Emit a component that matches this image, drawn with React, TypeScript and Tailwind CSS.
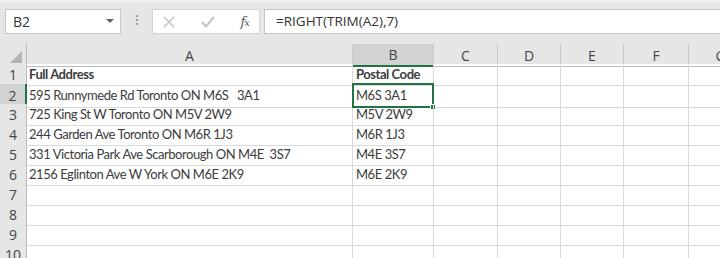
import React from "react";

const rows: { a: string; b: string; bold?: boolean }[] = [
  { a: "Full Address", b: "Postal Code", bold: true },
  { a: "595 Runnymede Rd Toronto ON M6S\u00a0\u00a0\u00a03A1", b: "M6S 3A1" },
  { a: "725 King St W Toronto ON M5V 2W9", b: "M5V 2W9" },
  { a: "244 Garden Ave Toronto ON M6R 1J3", b: "M6R 1J3" },
  { a: "331 Victoria Park Ave Scarborough ON M4E\u00a0\u00a03S7", b: "M4E 3S7" },
  { a: "2156 Eglinton Ave W York ON M6E 2K9", b: "M6E 2K9" },
  { a: "", b: "" },
  { a: "", b: "" },
  { a: "", b: "" },
  { a: "", b: "" },
];

const cols = ["C", "D", "E", "F", "G"];
const grid = "grid w-[753px] grid-cols-[27px_326px_81px_64px_63px_63px_65px_64px]";

const App = () => {
  return (
    <div className="w-[720px] h-[258px] overflow-hidden bg-white font-['Lato',sans-serif]">
      {/* Formula toolbar */}
      <div className="h-[44px] bg-[#e6e6e6] flex items-start pt-[9px] pl-[5px] border-t-[3px] border-[#efefef]">
        <div className="w-[116px] h-[25px] -mt-[3px] bg-white border border-[#c6c6c6] flex items-center justify-between pl-[7px] pr-[6px] font-['Open_Sans',sans-serif] text-[14px] text-[#333]">
          <span>B2</span>
          <svg width="8" height="5" viewBox="0 0 8 5">
            <path d="M0 0 L8 0 L4 4 Z" fill="#666" />
          </svg>
        </div>
        <div className="w-[31px] h-[22px] -mt-[3px] flex flex-col items-center justify-center gap-[2px]">
          <span className="w-[2px] h-[2px] bg-[#a0a0a0]" />
          <span className="w-[2px] h-[2px] bg-[#a0a0a0]" />
          <span className="w-[2px] h-[2px] bg-[#a0a0a0]" />
        </div>
        <div className="w-[108px] h-[25px] -mt-[3px] bg-white border border-[#d4d4d4] flex items-center justify-between px-[10px]">
          <svg width="12" height="12" viewBox="0 0 12 12">
            <path d="M1 1 L11 11 M11 1 L1 11" stroke="#c4c4c4" strokeWidth="1.6" />
          </svg>
          <svg width="14" height="12" viewBox="0 0 14 12">
            <path d="M1 6 L5 10.5 L13 1" stroke="#c4c4c4" strokeWidth="2" fill="none" />
          </svg>
          <span className="font-['DejaVu_Serif',serif] italic text-[13px] text-[#555] leading-none tracking-[-1px]">
            f<span className="text-[10px]">x</span>
          </span>
        </div>
        <div className="flex-1 h-[25px] -mt-[3px] ml-[4px] bg-white border border-[#c6c6c6] border-r-0 flex items-center pl-[11px] font-['Open_Sans',sans-serif] text-[13.5px] text-[#333]">
          =RIGHT(TRIM(A2),7)
        </div>
      </div>

      {/* Column headers */}
      <div className={`${grid} h-[20px] bg-[#e6e6e6] text-[14px] text-[#444] font-['Open_Sans',sans-serif]`}>
        <div className="border-r border-b border-[#bcbcbc] flex items-end justify-end pr-[4px] pb-[3px]">
          <svg width="12" height="12" viewBox="0 0 12 12">
            <path d="M12 0 L12 12 L0 12 Z" fill="#b4b4b4" />
          </svg>
        </div>
        <div className="border-r border-b border-[#bcbcbc] border-r-[#c8c8c8] flex items-center justify-center">A</div>
        <div className="bg-[#d2d2d2] border-r border-[#c8c8c8] border-b-2 border-b-[#217346] flex items-center justify-center">B</div>
        {cols.map((c) => (
          <div key={c} className="border-r border-b border-[#bcbcbc] border-r-[#c8c8c8] flex items-center justify-center">
            {c}
          </div>
        ))}
      </div>

      {/* Rows */}
      {rows.map((r, i) => {
        const n = i + 1;
        const sel = n === 2;
        return (
          <div key={n} className={`${grid} h-[20px] text-[13px] tracking-[-0.45px] text-[#3c3c3c]`}>
            <div
              className={`border-b flex items-center justify-center font-['Open_Sans',sans-serif] text-[14px] tracking-normal text-[#444] ${
                sel ? "bg-[#d2d2d2] border-r-2 border-r-[#217346] border-b-[#c8c8c8]" : "bg-[#e6e6e6] border-r border-[#c8c8c8] border-r-[#bcbcbc]"
              }`}
            >
              {n}
            </div>
            <div className={`border-r border-b border-[#dadada] flex items-center pl-[2px] pt-[1px] whitespace-nowrap ${r.bold ? "font-bold" : ""}`}>
              {r.a}
            </div>
            <div
              className={`relative flex items-center whitespace-nowrap pt-[1px] ${r.bold ? "font-bold" : ""} ${
                sel ? "border-2 border-[#217346] -mt-[1px] -ml-[1px] pl-[2px]" : "border-r border-b border-[#dadada] pl-[3px]"
              }`}
            >
              {r.b}
              {sel && <span className="absolute -right-[4px] -bottom-[4px] w-[6px] h-[6px] bg-[#217346] border border-white" />}
            </div>
            {cols.map((c) => (
              <div key={c} className="border-r border-b border-[#dadada]" />
            ))}
          </div>
        );
      })}
    </div>
  );
};

export default App;
